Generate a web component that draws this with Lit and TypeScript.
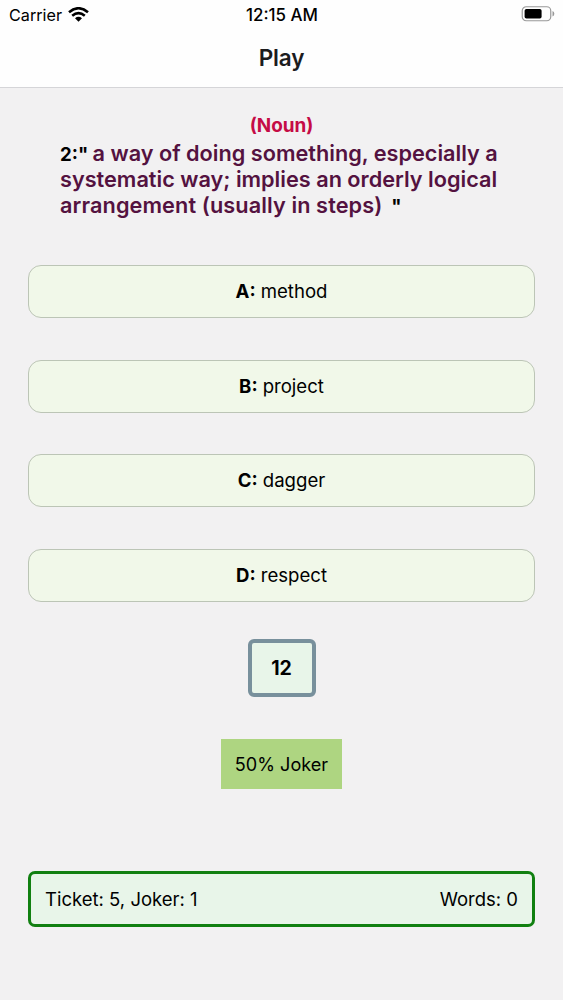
import { LitElement, html, css } from "lit";
import { customElement } from "lit/decorators.js";

const answers = [["A", "method"], ["B", "project"], ["C", "dagger"], ["D", "respect"]];

@customElement("app-root")
export class AppRoot extends LitElement {
  static styles = css`
    :host { display: flex; flex-direction: column; height: 1000px; background: #f2f1f2; font-family: Inter, sans-serif; color: #000; box-sizing: border-box; }
    * { box-sizing: border-box; }
    header { height: 88px; background: #fefefe; border-bottom: 1px solid #d5d5d8; }
    .status { display: grid; grid-template-columns: 1fr auto 1fr; align-items: center; height: 29px; padding: 0 8px 0 9px; font-size: 16.2px; }
    .carrier { display: flex; align-items: center; gap: 6px; }
    .time { font-weight: 500; font-size: 16.9px; }
    .battery { justify-self: end; display: block; margin-top: -2px; }
    h1 { margin: 0; text-align: center; font-size: 22.5px; line-height: 57px; font-weight: 600; letter-spacing: -.2px; color: #1c1c1e; }
    .kind { margin-top: 25px; text-align: center; font-weight: 700; font-size: 18.9px; line-height: 26px; color: #c50c46; }
    .question { margin: 1px 60px 0; height: 78px; }
    .line { height: 26px; line-height: 26px; font-size: 18.6px; font-weight: 700; white-space: nowrap; }
    .line b { font-size: 21.7px; line-height: 26px; font-weight: 600; color: #541240; }
    .line .wide { letter-spacing: .1px; }
    .answers { display: flex; flex-direction: column; gap: 41.67px; margin: 47px 28px 0; }
    .answer { height: 53px; border: 1px solid #bcc5b6; border-radius: 13px; background: #f1f8e9; display: flex; align-items: center; justify-content: center; gap: 5px; padding-bottom: 1px; font-size: 18.6px; }
    .timer { align-self: center; margin-top: 37px; width: 68px; height: 58px; border: 4px solid #78909c; border-radius: 6px; background: #e8f5e9; display: grid; place-items: center; font-weight: 700; font-size: 19.5px; }
    .joker { align-self: center; margin-top: 42px; width: 121px; height: 50px; background: #aed581; display: grid; place-items: center; font-size: 18.1px; }
    footer { margin: 82px 28px 0; height: 56px; border: 3px solid #118011; border-radius: 7px; background: #e8f5e9; display: flex; align-items: center; justify-content: space-between; padding: 0 14px; font-size: 18.5px; }
  `;
  render() {
    return html`
      <header>
        <div class="status">
          <span class="carrier"><span>Carrier</span>
            <svg width="21" height="15" viewBox="0 0 21 15" fill="none" stroke="#000" stroke-width="2.6"><path d="M1 5.2Q10.5-2.7 20 5.2M4.2 8.7Q10.5 3.4 16.8 8.7"/><path fill="#000" stroke="none" d="M7 11.2Q10.5 8.3 14 11.2L10.5 14.8Z"/></svg>
          </span>
          <span class="time">12:15 AM</span>
          <svg class="battery" width="34" height="16" viewBox="0 0 34 16"><rect x="1.25" y=".75" width="28.5" height="14" rx="4" fill="none" stroke="#999" stroke-width="1.2"/><rect x="3.6" y="3" width="17" height="9.6" rx="1.8"/><path d="M31.5 5Q33.3 5.8 33.3 7.8T31.5 10.6Z" fill="#999"/></svg>
        </div>
        <h1>Play</h1>
      </header>
      <div class="kind">(Noun)</div>
      <div class="question">
        <div class="line">2:" <b>a way of doing something, especially a</b></div>
        <div class="line"><b>systematic way; implies an orderly logical</b></div>
        <div class="line"><b class="wide">arrangement (usually in steps)</b>&nbsp; "</div>
      </div>
      <div class="answers">${answers.map(([k, t]) => html`<div class="answer"><b>${k}:</b><span>${t}</span></div>`)}</div>
      <div class="timer">12</div>
      <div class="joker">50% Joker</div>
      <footer><span>Ticket: 5, Joker: 1</span><span>Words: 0</span></footer>
    `;
  }
}
